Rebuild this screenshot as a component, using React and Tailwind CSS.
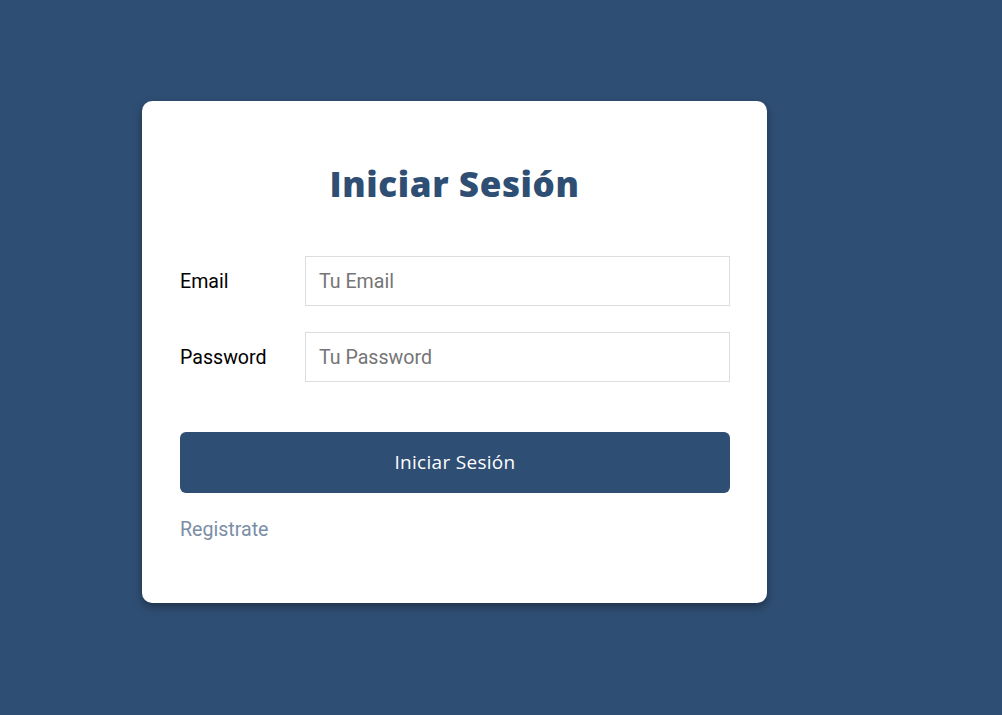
export default function App() {
  return (
    <div className="min-h-screen w-full bg-[#2f4e73] pt-[101px] pl-[142px]" style={{ height: 715 }}>
      <div className="w-[625px] h-[502px] rounded-[10px] bg-white pl-[38px] pr-[37px] pt-[162px] shadow-[0_4px_8px_rgba(0,0,0,0.35)] relative">
        <h1 className="absolute left-0 right-0 top-[61px] text-center text-[35px] leading-[44px] font-extrabold text-[#2f4e73] font-['Open_Sans',sans-serif] tracking-[0.6px]">
          Iniciar Sesión
        </h1>
        <form className="flex flex-col gap-[26px] mt-[-7px]" onSubmit={(e) => e.preventDefault()}>
          <div className="flex items-center">
            <label className="w-[125px] pt-[2px] text-[19.6px] text-black font-['Roboto',sans-serif]">Email</label>
            <input
              type="email"
              placeholder="Tu Email"
              className="flex-1 h-[50px] border border-[#dddddd] px-[13px] text-[19.6px] font-['Roboto',sans-serif] placeholder:text-[#757575] outline-none"
            />
          </div>
          <div className="flex items-center">
            <label className="w-[125px] pt-[2px] text-[19.6px] text-black font-['Roboto',sans-serif]">Password</label>
            <input
              type="password"
              placeholder="Tu Password"
              className="flex-1 h-[50px] border border-[#dddddd] px-[13px] text-[19.6px] font-['Roboto',sans-serif] placeholder:text-[#757575] outline-none"
            />
          </div>
          <button
            type="submit"
            className="mt-[24px] h-[61px] w-full rounded-[6px] bg-[#2f4e73] text-white text-[19px] tracking-[0.3px] font-['Open_Sans',sans-serif]"
          >
            Iniciar Sesión
          </button>
        </form>
        <a className="block mt-[23px] text-[19.6px] leading-[27px] text-[#7b8ea6] font-['Roboto',sans-serif]" href="#">
          Registrate
        </a>
      </div>
    </div>
  );
}
